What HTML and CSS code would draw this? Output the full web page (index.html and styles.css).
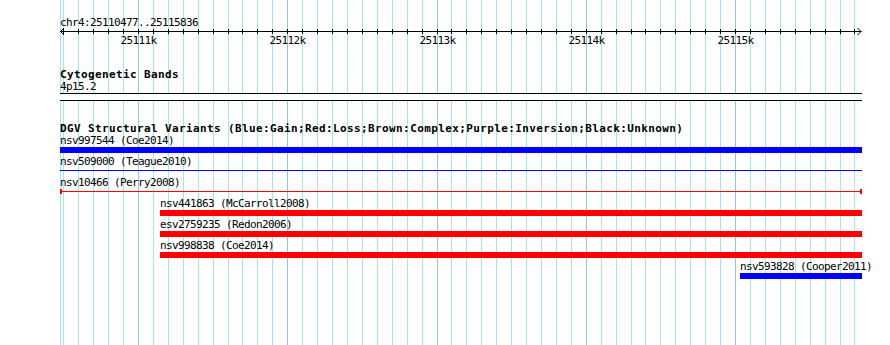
FILE: index.html
```html
<!DOCTYPE html>
<html lang="en">
<head>
    <meta charset="UTF-8">
    <title>Genome Browser - chr4:25110477-25115836</title>
    <link rel="stylesheet" href="styles.css">
</head>
<body>
    <div class="browser">
        <!-- guide lines every 100bp, darker every 1kb -->
        <svg class="guides" width="890" height="345" viewBox="0 0 890 345">
            <path class="guide" d="M60.5 0V345M63.5 0V345M78.5 0V345M93.5 0V345M108.5 0V345M123.5 0V345M153.5 0V345M168.5 0V345M183.5 0V345M198.5 0V345M213.5 0V345M228.5 0V345M242.5 0V345M257.5 0V345M272.5 0V345M302.5 0V345M317.5 0V345M332.5 0V345M347.5 0V345M362.5 0V345M377.5 0V345M392.5 0V345M407.5 0V345M422.5 0V345M451.5 0V345M466.5 0V345M481.5 0V345M496.5 0V345M511.5 0V345M526.5 0V345M541.5 0V345M556.5 0V345M571.5 0V345M601.5 0V345M616.5 0V345M631.5 0V345M645.5 0V345M660.5 0V345M675.5 0V345M690.5 0V345M705.5 0V345M720.5 0V345M750.5 0V345M765.5 0V345M780.5 0V345M795.5 0V345M810.5 0V345M825.5 0V345M840.5 0V345M854.5 0V345"/>
            <path class="guide-major" d="M138.5 0V345M287.5 0V345M437.5 0V345M586.5 0V345M735.5 0V345"/>
        </svg>

        <div class="tracks">
            <svg class="ruler" width="802" height="68" viewBox="0 0 802 68">
                <text class="ruler-text" x="0" y="26">chr4:25110477..25115836</text>
                <path class="axis" d="M0 31.5H801.5M4 28L0.5 31.5L4 35M797.5 28L801 31.5L797.5 35"/>
                <path class="ticks" d="M3.5 29v5M18.5 29v5M33.5 29v5M48.5 29v5M63.5 29v5M78.5 29v5M93.5 29v5M108.5 29v5M123.5 29v5M138.5 29v5M153.5 29v5M168.5 29v5M182.5 29v5M197.5 29v5M212.5 29v5M227.5 29v5M242.5 29v5M257.5 29v5M272.5 29v5M287.5 29v5M302.5 29v5M317.5 29v5M332.5 29v5M347.5 29v5M362.5 29v5M377.5 29v5M391.5 29v5M406.5 29v5M421.5 29v5M436.5 29v5M451.5 29v5M466.5 29v5M481.5 29v5M496.5 29v5M511.5 29v5M526.5 29v5M541.5 29v5M556.5 29v5M571.5 29v5M585.5 29v5M600.5 29v5M615.5 29v5M630.5 29v5M645.5 29v5M660.5 29v5M675.5 29v5M690.5 29v5M705.5 29v5M720.5 29v5M735.5 29v5M750.5 29v5M765.5 29v5M780.5 29v5M794.5 29v5"/>
                <text class="ruler-text" x="78.5" y="44" text-anchor="middle">25111k</text>
                <text class="ruler-text" x="227.5" y="44" text-anchor="middle">25112k</text>
                <text class="ruler-text" x="377.5" y="44" text-anchor="middle">25113k</text>
                <text class="ruler-text" x="526.5" y="44" text-anchor="middle">25114k</text>
                <text class="ruler-text" x="675.5" y="44" text-anchor="middle">25115k</text>
            </svg>

            <section class="track cyto">
                <div class="track-title">Cytogenetic Bands</div>
                <div class="item-label">4p15.2</div>
                <div class="band gpos0"></div>
            </section>

            <section class="track dgv">
                <div class="track-title">DGV Structural Variants (Blue:Gain;Red:Loss;Brown:Complex;Purple:Inversion;Black:Unknown)</div>

                <div class="feature gain" style="margin-left:0px;width:802px">
                    <div class="item-label">nsv997544 (Coe2014)</div>
                    <div class="bar"></div>
                </div>
                <div class="feature gain" style="margin-left:0px;width:802px">
                    <div class="item-label">nsv509000 (Teague2010)</div>
                    <div class="bar thin"></div>
                </div>
                <div class="feature loss" style="margin-left:0px;width:802px">
                    <div class="item-label">nsv10466 (Perry2008)</div>
                    <div class="bar thin capped"></div>
                </div>
                <div class="feature loss" style="margin-left:100px;width:702px">
                    <div class="item-label">nsv441863 (McCarroll2008)</div>
                    <div class="bar"></div>
                </div>
                <div class="feature loss" style="margin-left:100px;width:702px">
                    <div class="item-label">esv2759235 (Redon2006)</div>
                    <div class="bar"></div>
                </div>
                <div class="feature loss" style="margin-left:100px;width:702px">
                    <div class="item-label">nsv998838 (Coe2014)</div>
                    <div class="bar"></div>
                </div>
                <div class="feature gain" style="margin-left:680px;width:122px">
                    <div class="item-label">nsv593828 (Cooper2011)</div>
                    <div class="bar"></div>
                </div>
            </section>
        </div>
    </div>
</body>
</html>
```

FILE: styles.css
```css
body {
    margin: 0;
    font-family: "DejaVu Sans Mono", monospace;
    color: #000;
    background: #fff;
}

.browser {
    position: relative;
    width: 890px;
    height: 345px;
    overflow: hidden;
    background: #fff;
}

.guides {
    position: absolute;
    left: 0;
    top: 0;
}

.guide {
    stroke: #a4e6ee;
    stroke-width: 1;
}

.guide-major {
    stroke: #8cc6e8;
    stroke-width: 1;
}

.tracks {
    position: relative;
    margin-left: 60px;
    width: 802px;
}

.ruler {
    display: block;
    overflow: visible;
}

.ruler-text {
    font-family: "DejaVu Sans Mono", monospace;
    font-size: 11px;
    letter-spacing: -0.62px;
    fill: #000;
}

.axis, .ticks {
    stroke: #000;
    stroke-width: 1;
    fill: none;
}

.track-title {
    font-size: 11px;
    font-weight: bold;
    line-height: 13px;
    letter-spacing: 0.38px;
    white-space: nowrap;
}

.item-label {
    font-size: 11px;
    line-height: 11px;
    letter-spacing: -0.62px;
    white-space: nowrap;
}

.band {
    height: 6px;
    margin-top: 1px;
    border-top: 1px solid #000;
    border-bottom: 1px solid #000;
    background: #fff;
}

.dgv {
    margin-top: 21px;
}

.feature {
    padding-bottom: 3px;
}

.gain {
    color: #0000ff;
}

.loss {
    color: #ff0000;
}

.feature .item-label {
    color: #000;
}

.bar {
    height: 6px;
    margin-top: 1px;
    background: currentColor;
}

.bar.thin {
    background: linear-gradient(currentColor, currentColor) 0 2px / 100% 1px no-repeat;
}

.bar.thin.capped {
    background:
        linear-gradient(currentColor, currentColor) 0 0 / 2px 5px no-repeat,
        linear-gradient(currentColor, currentColor) 100% 0 / 2px 5px no-repeat,
        linear-gradient(currentColor, currentColor) 0 2px / 100% 1px no-repeat;
}
```
